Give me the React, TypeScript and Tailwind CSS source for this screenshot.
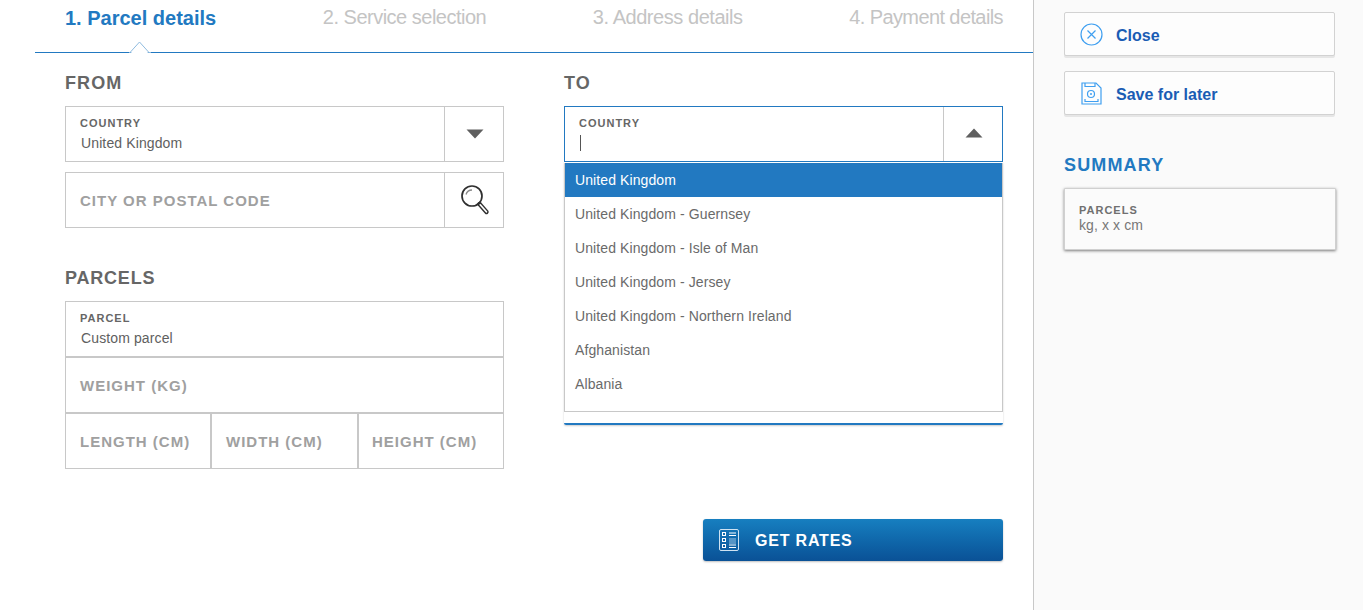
import React from "react";

const Caret = ({ up }: { up?: boolean }) => (
  <svg width="18" height="10" viewBox="0 0 18 10" className="block">
    <path d={up ? "M9 0.5 L17.5 9.5 L0.5 9.5 Z" : "M0.5 0.5 L17.5 0.5 L9 9.5 Z"} fill="#5f5f5f" />
  </svg>
);

const SearchIcon = () => (
  <svg width="30" height="32" viewBox="0 0 30 32" fill="none" className="block">
    <circle cx="12" cy="12" r="10" stroke="#2f2f2f" strokeWidth="1.7" />
    <path d="M6 10.5 A6.5 6.5 0 0 1 12 6" stroke="#8a8a8a" strokeWidth="1.3" />
    <path d="M19.5 20 L26.5 28" stroke="#2f2f2f" strokeWidth="4.4" strokeLinecap="round" />
    <path d="M20.2 20.8 L26.4 27.8" stroke="#fff" strokeWidth="1.7" strokeLinecap="round" />
  </svg>
);

const Field = ({ label, value, cursor }: { label: string; value?: string; cursor?: boolean }) => (
  <div className="flex-1 min-w-0 pl-[14px] pt-[9px]">
    <div className="text-[11px] leading-[14px] font-bold tracking-[1px] text-[#666]">{label}</div>
    {cursor ? (
      <div className="ml-[1px] mt-[5px] w-px h-[16px] bg-[#555]" />
    ) : (
      <div className="ml-px mt-[4px] text-[14px] leading-[18px] tracking-[0.12px] text-[#606060]">{value}</div>
    )}
  </div>
);

const Placeholder = ({ children, className = "" }: { children: React.ReactNode; className?: string }) => (
  <div className={`flex items-center pt-[2px] text-[15px] font-bold tracking-[1px] text-[#a0a0a0] ${className}`}>{children}</div>
);

const options = [
  "United Kingdom",
  "United Kingdom - Guernsey",
  "United Kingdom - Isle of Man",
  "United Kingdom - Jersey",
  "United Kingdom - Northern Ireland",
  "Afghanistan",
  "Albania",
];

export default function App() {
  return (
    <div className="flex w-[1363px] h-[610px] overflow-hidden bg-white font-['Liberation_Sans',Arial,sans-serif]">
      <main className="w-[1034px] shrink-0 border-r border-[#c8c8c8] pl-[35px]">
        <div className="relative h-[53px] border-b border-[#2279c1] pl-[30px] pr-[30px] flex justify-between pt-[6px] text-[20px] leading-[24px]">
          <span className="font-bold text-[#2279c1]">1. Parcel details</span>
          <span className="-mt-px tracking-[-0.5px] text-[#c4c4c4]">2. Service selection</span>
          <span className="-mt-px tracking-[-0.45px] text-[#c4c4c4]">3. Address details</span>
          <span className="-mt-px tracking-[-0.6px] text-[#c4c4c4]">4. Payment details</span>
          <svg width="22" height="12" viewBox="0 0 22 12" className="absolute left-[94px] top-[41px]">
            <path d="M0 11.5 L1 11.5 L10.5 1 L20 11.5 L22 11.5" fill="#fff" stroke="#8fbbdf" strokeWidth="1" />
            <path d="M2 12 L10.5 2.5 L19 12 Z" fill="#fff" />
          </svg>
        </div>

        <div className="flex pl-[30px] pr-[30px] gap-[60px] pt-[20px]">
          {/* FROM column */}
          <section className="w-[439px]">
            <h2 className="text-[18px] leading-[20px] font-bold tracking-[1.1px] text-[#666] mb-[13px]">FROM</h2>
            <div className="flex h-[56px] border border-[#c8c8c8]">
              <Field label="COUNTRY" value="United Kingdom" />
              <div className="w-[59px] border-l border-[#c8c8c8] flex items-center justify-center pl-[2px]"><Caret /></div>
            </div>
            <div className="flex h-[56px] border border-[#c8c8c8] mt-[10px]">
              <Placeholder className="flex-1 pl-[14px]">CITY OR POSTAL CODE</Placeholder>
              <div className="w-[59px] border-l border-[#c8c8c8] flex items-center justify-center pl-px"><SearchIcon /></div>
            </div>

            <h2 className="mt-[40px] text-[18px] leading-[20px] font-bold tracking-[0.8px] text-[#666] mb-[13px]">PARCELS</h2>
            <div className="border border-[#c8c8c8]">
              <div className="flex h-[54px]"><Field label="PARCEL" value="Custom parcel" /></div>
              <Placeholder className="h-[56px] border-t-2 border-[#c8c8c8] pl-[14px] tracking-[0.8px]">WEIGHT (KG)</Placeholder>
              <div className="flex h-[56px] border-t-2 border-[#c8c8c8]">
                <Placeholder className="w-[144px] pl-[14px]">LENGTH (CM)</Placeholder>
                <Placeholder className="w-[147px] border-l-2 border-[#c8c8c8] pl-[14px]">WIDTH (CM)</Placeholder>
                <Placeholder className="flex-1 border-l-2 border-[#c8c8c8] pl-[13px]">HEIGHT (CM)</Placeholder>
              </div>
            </div>
          </section>

          {/* TO column */}
          <section className="w-[439px]">
            <h2 className="text-[18px] leading-[20px] font-bold tracking-[1.1px] text-[#666] mb-[13px]">TO</h2>
            <div className="relative">
              <div className="flex h-[56px] border border-[#2279c1]">
                <Field label="COUNTRY" cursor />
                <div className="w-[59px] border-l border-[#c8c8c8] flex items-center justify-center pl-px pb-[2px]"><Caret up /></div>
              </div>
              <div className="h-[263px] rounded-b-[2px] border-b-[2px] border-[#2279c1] shadow-[0_1px_2px_rgba(0,0,0,0.2)]" />
              <div className="absolute left-0 right-0 top-[57px] h-[249px] bg-white border-x border-b border-[#c8c8c8] overflow-hidden">
                {options.map((o, i) => (
                  <div
                    key={o}
                    className={`h-[34px] pl-[10px] flex items-center text-[14px] tracking-[0.1px] ${i === 0 ? "bg-[#2279c1] text-white" : "text-[#6a6a6a]"}`}
                  >
                    {o}
                  </div>
                ))}
              </div>
            </div>
            <div className="flex justify-end mt-[94px]">
              <button className="w-[300px] h-[42px] rounded-[3px] bg-gradient-to-b from-[#177fc0] to-[#0a5196] shadow-[0_1px_2px_rgba(0,0,0,0.25)] flex items-center pl-[16px] text-white text-[16px] font-bold tracking-[0.8px]">
                <svg width="20" height="22" viewBox="0 0 20 22" fill="none" className="block mr-[16px]">
                  <rect x="0.5" y="0.5" width="19" height="21" rx="1.5" stroke="#cfe2f2" />
                  <g stroke="#fff" strokeWidth="1">
                    <rect x="3.5" y="3.5" width="3" height="3" />
                    <rect x="3.5" y="9.5" width="3" height="3" />
                    <rect x="3.5" y="15.5" width="3" height="3" />
                    <path d="M10 4h7M10 6.5h7" />
                    <path d="M10 16h7M10 18.5h7" />
                  </g>
                  <path d="M10 10h7M10 12h7M10 14h7" stroke="#9fc4e2" strokeWidth="1" />
                </svg>
                <span className="mt-[2px]">GET RATES</span>
              </button>
            </div>
          </section>
        </div>
      </main>

      <aside className="flex-1 bg-[#fafafa] pl-[30px] pr-[28px] pt-[12px]">
        <button className="w-[271px] h-[44px] rounded-[2px] bg-[#fdfdfd] border border-[#d2d2d2] shadow-[0_2px_0_#e6e6e6] flex items-center pl-[15px] text-[16px] font-bold text-[#1a5cb4]">
          <svg width="23" height="23" viewBox="0 0 23 23" fill="none" className="block mr-[13px]">
            <circle cx="11.5" cy="11.5" r="10.5" stroke="#3f9ff0" strokeWidth="1.2" />
            <path d="M7.5 7.5 L15.5 15.5 M15.5 7.5 L7.5 15.5" stroke="#3f9ff0" strokeWidth="1.2" />
          </svg>
          <span className="mt-[4px]">Close</span>
        </button>
        <button className="mt-[15px] w-[271px] h-[44px] rounded-[2px] bg-[#fdfdfd] border border-[#d2d2d2] shadow-[0_2px_0_#e6e6e6] flex items-center pl-[16px] text-[16px] font-bold text-[#1a5cb4]">
          <svg width="21" height="23" viewBox="0 0 21 23" fill="none" className="block mr-[14px]">
            <path d="M1 1 H15 L20 6 V22 H1 Z" stroke="#3f9ff0" strokeWidth="1.2" />
            <path d="M4 1 V4.5 H14 V1" stroke="#3f9ff0" strokeWidth="1.2" />
            <circle cx="10" cy="12" r="3.5" stroke="#3f9ff0" strokeWidth="1.2" />
            <circle cx="10" cy="12" r="1" fill="#3f9ff0" />
            <path d="M4 17 V19.5 H17 V17" stroke="#3f9ff0" strokeWidth="1.2" />
          </svg>
          <span className="mt-[4px]">Save for later</span>
        </button>
        <h2 className="mt-[39px] text-[18px] leading-[22px] font-bold tracking-[1.15px] text-[#2279c1]">SUMMARY</h2>
        <div className="mt-[12px] w-[272px] h-[62px] rounded-[1px] bg-[#fbfbfb] border border-[#d0d0d0] shadow-[0_1px_3px_rgba(0,0,0,0.5)] pl-[14px] pt-[14px]">
          <div className="text-[11px] leading-[14px] font-bold tracking-[1px] text-[#707070]">PARCELS</div>
          <div className="text-[14px] leading-[16px] tracking-[0.1px] text-[#777]">kg, x x cm</div>
        </div>
      </aside>
    </div>
  );
}
